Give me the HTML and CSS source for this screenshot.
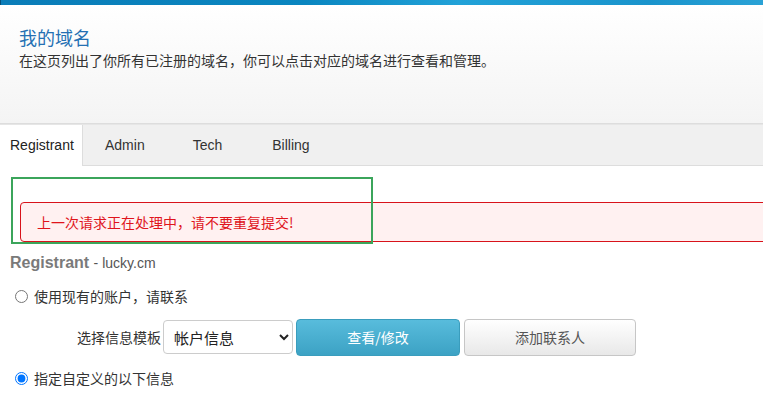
FILE: index.html
```html
<!DOCTYPE html>
<html lang="zh-CN">
<head>
<meta charset="utf-8">
<link rel="stylesheet" href="styles.css">
</head>
<body>
<div class="topbar"></div>
<header class="page-head">
  <h1 class="title">我的域名</h1>
  <p class="subtitle">在这页列出了你所有已注册的域名，你可以点击对应的域名进行查看和管理。</p>
</header>
<nav class="tabs">
  <div class="tab active">Registrant</div>
  <div class="tab">Admin</div>
  <div class="tab">Tech</div>
  <div class="tab">Billing</div>
</nav>
<main class="content">
  <div class="alert-wrap">
    <div class="alert">上一次请求正在处理中，请不要重复提交!</div>
    <div class="focus-box"></div>
  </div>
  <h2 class="section-title"><span class="strong">Registrant</span> <span class="domain">- lucky.cm</span></h2>
  <label class="radio-row"><input type="radio" name="mode"> 使用现有的账户，请联系</label>
  <div class="template-row">
    <span class="tpl-label">选择信息模板</span>
    <select class="tpl-select"><option>帐户信息</option></select>
    <button class="btn btn-primary">查看/修改</button>
    <button class="btn btn-default">添加联系人</button>
  </div>
  <label class="radio-row"><input type="radio" name="mode" checked> 指定自定义的以下信息</label>
</main>
</body>
</html>
```
FILE: styles.css
```css
html, body { margin: 0; padding: 0; }
body {
  width: 763px;
  height: 406px;
  overflow: hidden;
  font-family: "Liberation Sans", "Noto Sans CJK SC", sans-serif;
  color: #333;
  background: #fff;
}
.topbar {
  height: 5px;
  background: linear-gradient(90deg, #0b7db8 0%, #0a86c0 40%, #22a2d8 60%, #1a94cc 85%, #2aa2d6 100%);
  border-left: 1px solid #06507a;
}
.page-head {
  height: 119px;
  box-sizing: border-box;
  padding: 19px 19px 0;
  background: linear-gradient(180deg, #ffffff 0%, #f4f4f4 100%);
  border-bottom: 1px solid #ddd;
}
.title {
  margin: 0;
  font-family: "Noto Sans CJK SC", sans-serif;
  font-weight: 400;
  font-size: 18px;
  line-height: 26px;
  color: #2470b3;
}
.subtitle {
  margin: 0;
  font-family: "Noto Sans CJK SC", sans-serif;
  font-size: 14px;
  line-height: 20px;
  color: #333;
}
.tabs {
  display: flex;
  height: 40px;
  background: #f0f0f0;
  border-bottom: 1px solid #ddd;
  border-top: 1px solid #e6e6e6;
}
.tab {
  font-size: 14px;
  line-height: 40px;
  color: #333;
}
.tab:nth-child(2) { margin-left: 22px; }
.tab:nth-child(3) { margin-left: 48px; }
.tab:nth-child(4) { margin-left: 50px; }
.tab.active {
  background: #fff;
  width: 83px;
  padding-left: 10px;
  box-sizing: border-box;
  border-right: 1px solid #ddd;
  height: 41px;
  color: #222;
}
.content {
  padding: 36px 0 0 10px;
  overflow: hidden;
}
.alert-wrap {
  position: relative;
  margin-left: 10px;
  margin-right: -40px;
}
.alert {
  height: 40px;
  box-sizing: border-box;
  border: 1px solid #d8131b;
  border-radius: 4px;
  background: #fff1f1;
  color: #e0141c;
  font-family: "Noto Sans CJK SC", sans-serif;
  font-size: 14px;
  line-height: 38px;
  padding-left: 16px;
}
.focus-box {
  position: absolute;
  left: -9px;
  top: -25px;
  width: 362px;
  height: 67px;
  box-sizing: border-box;
  border: 2px solid #3ba55b;
}
.section-title {
  margin: 10px 0 0;
  font-size: 16px;
  line-height: 22px;
  font-weight: 400;
}
.section-title .strong { font-weight: 700; color: #7a7a7a; }
.section-title .domain { font-size: 14px; color: #555; }
.radio-row {
  display: flex;
  align-items: center;
  gap: 6px;
  font-family: "Noto Sans CJK SC", sans-serif;
  font-size: 14px;
  color: #333;
  margin-top: 11px;
  height: 22px;
}
.radio-row input { margin: 0 0 0 5px; width: 13px; height: 13px; }
.template-row {
  display: flex;
  align-items: center;
  margin: 11px 0 11px 67px;
  height: 38px;
}
.tpl-label {
  font-family: "Noto Sans CJK SC", sans-serif;
  font-size: 14px;
  color: #333;
  margin-right: 2px;
}
.tpl-select {
  width: 130px;
  height: 34px;
  border: 1px solid #ccc;
  border-radius: 4px;
  background: #fff;
  font-family: "Noto Sans CJK SC", sans-serif;
  font-size: 15px;
  color: #222;
  padding-left: 6px;
}
.btn {
  height: 37px;
  border-radius: 4px;
  font-family: "Noto Sans CJK SC", sans-serif;
  font-size: 14px;
  cursor: pointer;
}
.btn-primary {
  width: 164px;
  margin-left: 3px;
  border: 1px solid #3a9dbd;
  background: linear-gradient(180deg, #58bcdc 0%, #3ca2c4 100%);
  color: #fff;
}
.btn-default {
  width: 172px;
  margin-left: 4px;
  border: 1px solid #c6c6c6;
  background: linear-gradient(180deg, #ffffff 0%, #e8e8e8 100%);
  color: #555;
}
```
